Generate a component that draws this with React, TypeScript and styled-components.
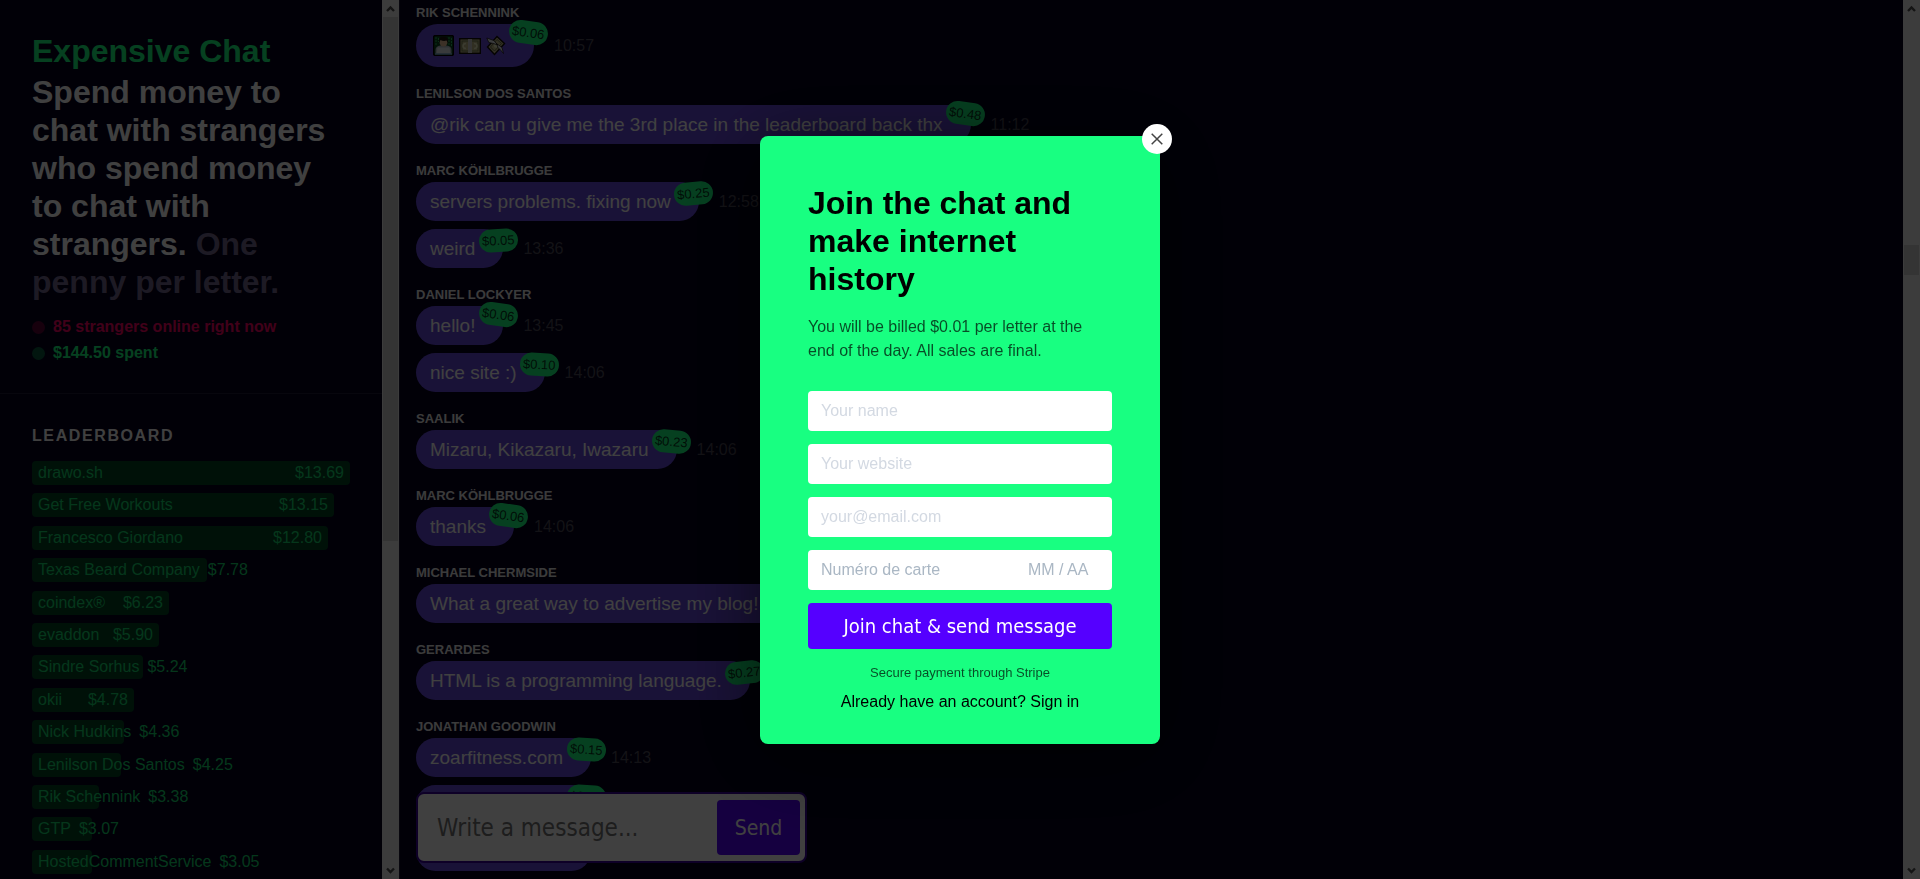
import React from "react";
import styled, { createGlobalStyle, css } from "styled-components";

const GREEN = "#18ff81";
const VIOLET = "#5500ff";
const SANS = `"Liberation Sans", Arial, sans-serif`;
const UI = `"DejaVu Sans Condensed", "DejaVu Sans", Tahoma, sans-serif`;

const GlobalStyle = createGlobalStyle`
  *, *::before, *::after { box-sizing: border-box; }
  body {
    margin: 0;
    overflow: hidden;
    background: #04001c;
    color: #fff;
    font: 16px/24px ${SANS};
  }
  h1, h2, h3, p, ul, ol { margin: 0; padding: 0; }
  ul, ol { list-style: none; }
  button, input { font: inherit; border: 0; margin: 0; }
`;

const Shell = styled.div`
  display: grid;
  grid-template-columns: 400px minmax(0, 1fr) 17px;
  height: 100vh;
  overflow: hidden;
`;

const Sidebar = styled.aside`
  display: grid;
  grid-template-columns: minmax(0, 1fr) 17px;
  min-height: 0;
  border-right: 1px solid #1c1834;
`;

const SidebarBody = styled.div`
  overflow: hidden;
`;

const Intro = styled.header`
  padding: 32px 32px 27px;
  border-bottom: 1px solid #1c1834;
`;

const Brand = styled.h1`
  margin-bottom: 3px;
  font-size: 32px;
  line-height: 38px;
  color: ${GREEN};
`;

const Tagline = styled.h2`
  font-size: 32px;
  line-height: 38px;
`;

const Muted = styled.span`
  color: #746890;
`;

const Stats = styled.ul`
  margin-top: 13px;
  font-weight: bold;
  line-height: 26px;
`;

const Stat = styled.li<{ $color: string }>`
  display: flex;
  align-items: center;
  gap: 8px;
  color: ${(p) => p.$color};

  &::before {
    content: "";
    width: 13px;
    height: 13px;
    border-radius: 50%;
    background: currentColor;
    opacity: 0.35;
  }
`;

const Board = styled.section`
  padding: 30px 32px;
`;

const BoardTitle = styled.h3`
  margin-bottom: 13px;
  font-size: 16px;
  line-height: 24px;
  letter-spacing: 0.1em;
`;

const Ranks = styled.ol`
  display: flex;
  flex-direction: column;
  justify-content: space-between;
  height: 413px;
`;

const Rank = styled.li`
  display: flex;
  justify-content: space-between;
  gap: 8px;
  padding: 0 6px;
  border-radius: 4px;
  background: #034422;
  color: #15d86e;
  white-space: nowrap;
`;

const Scrollbar = styled.div`
  display: flex;
  flex-direction: column;
  background: #f0f0f0;
`;

const Track = styled.div`
  flex: 1;
  padding: 0 1px;
`;

const Thumb = styled.div`
  background: #cdcdcd;
`;

const Chat = styled.main`
  position: relative;
  padding: 0 16px;
  overflow: hidden;
`;

const Author = styled.h3`
  padding-top: 16px;
  font-size: 13px;
  line-height: 22px;
  text-transform: uppercase;
  color: #ececec;
`;

const Group = styled.section`
  &:first-child ${Author} {
    padding-top: 2px;
  }
`;

const Messages = styled.div`
  display: flex;
  flex-direction: column;
  gap: 8px;
`;

const Message = styled.div`
  display: flex;
  align-items: center;
  gap: 20px;
`;

const Bubble = styled.div<{ $tall?: boolean }>`
  position: relative;
  display: flex;
  align-items: center;
  gap: 5px;
  padding: ${(p) => (p.$tall ? "0 27px 0 17px" : "0 28px 0 14px")};
  height: ${(p) => (p.$tall ? 43 : 39)}px;
  border-radius: 22px;
  background: #6648dc;
  font-size: 19px;
  white-space: nowrap;
`;

const Price = styled.span<{ $tilt: number }>`
  position: absolute;
  right: -14px;
  top: 0;
  padding: 0 3px;
  height: 23px;
  border-radius: 12px;
  background: ${GREEN};
  color: rgba(0, 0, 0, 0.8);
  font-size: 13px;
  line-height: 23px;
  transform: rotate(${(p) => p.$tilt}deg);
  ${(p) =>
    p.$tilt > 6 &&
    css`
      top: -3px;
    `}
`;

const Time = styled.time`
  color: #4c4a58;
`;

const Composer = styled.form`
  position: absolute;
  left: 16px;
  bottom: 16px;
  display: flex;
  width: 391px;
  height: 71px;
  padding: 6px 5px 6px 6px;
  border: 2px solid #38009c;
  border-radius: 8px;
  background: #fff;
  font-family: ${UI};
`;

const Draft = styled.input`
  flex: 1;
  min-width: 0;
  padding: 0 13px;
  background: none;
  font-size: 24px;

  &::placeholder {
    color: #757575;
    opacity: 1;
  }
`;

const SendButton = styled.button`
  width: 83px;
  border-radius: 4px;
  background: ${VIOLET};
  color: #fff;
  font-size: 21px;
`;

const Overlay = styled.div`
  position: fixed;
  inset: 0;
  display: flex;
  align-items: center;
  justify-content: center;
  background: rgba(0, 0, 0, 0.75);
`;

const Dialog = styled.div`
  position: relative;
  width: 400px;
  padding: 48px 48px 30px;
  border-radius: 8px;
  background: ${GREEN};
  color: #000;
  box-shadow: 0 12px 80px rgba(0, 0, 0, 0.6);
`;

const CloseButton = styled.button`
  position: absolute;
  top: -12px;
  right: -12px;
  display: grid;
  place-items: center;
  width: 30px;
  height: 30px;
  padding: 0;
  border-radius: 50%;
  background: #fff;
`;

const DialogTitle = styled.h2`
  font-size: 32px;
  line-height: 38px;
`;

const DialogText = styled.p`
  margin: 17px 0 28px;
  color: rgba(0, 0, 0, 0.7);
`;

const JoinForm = styled.form`
  display: flex;
  flex-direction: column;
  gap: 13px;
`;

const Field = styled.input`
  width: 100%;
  height: 40px;
  padding: 0 13px;
  border-radius: 4px;
  background: #fff;

  &::placeholder {
    color: #d3d9e2;
    opacity: 1;
  }
`;

const CardRow = styled.div`
  display: flex;
  height: 40px;
  padding: 0 13px;
  border-radius: 4px;
  background: #fff;
`;

const CardField = styled.input<{ $width?: number }>`
  flex: ${(p) => (p.$width ? "none" : 1)};
  width: ${(p) => p.$width ?? 0}px;
  min-width: 0;
  padding: 0;
  background: none;

  &::placeholder {
    color: #aab7c4;
    opacity: 1;
  }
`;

const JoinButton = styled.button`
  height: 46px;
  border-radius: 4px;
  background: ${VIOLET};
  color: #fff;
  font-family: ${UI};
  font-size: 20px;
`;

const Secure = styled.p`
  margin: 14px 0 7px;
  font-size: 13px;
  line-height: 20px;
  text-align: center;
  color: rgba(0, 0, 0, 0.7);
`;

const SignIn = styled.a`
  display: block;
  color: #000;
  text-align: center;
  text-decoration: none;
`;

const Arrow = ({ down }: { down?: boolean }) => (
  <svg width="17" height="17" viewBox="0 0 17 17" aria-hidden="true">
    <path
      d={down ? "M5 6.5l3.5 3.5L12 6.5" : "M5 11l3.5-3.5L12 11"}
      fill="none"
      stroke="#505050"
      strokeWidth="2.4"
    />
  </svg>
);

const ScrollRail = ({ start, size }: { start: string; size: string }) => (
  <Scrollbar aria-hidden="true">
    <Arrow />
    <Track>
      <div style={{ height: start }} />
      <Thumb style={{ height: size }} />
    </Track>
    <Arrow down />
  </Scrollbar>
);

const Coder = () => (
  <svg width="21" height="21" viewBox="0 0 21 21" role="img" aria-label="Technologist">
    <rect x=".5" y=".5" width="20" height="20" rx="2" fill="#0a4a20" stroke="#000" strokeWidth="1.4" />
    <path d="M3 2v9M5.500 3v4M16 2v8M18.500 3v9" stroke="#2ab85c" strokeDasharray="2 1" />
    <path d="M2.500 19v-4q0-4 5-4.500h6q5 .5 5 4.500v4z" fill="#b0bcc8" />
    <ellipse cx="10.500" cy="7" rx="4" ry="4.500" fill="#f0c49c" />
    <path d="M6 8V5q0-3.500 4.500-3.500T15 5v3l-1.500-2.500q-3 1-6-.5z" fill="#1c1410" />
    <path d="M4.500 12.500h12l1 6.500h-14z" fill="#e4eaf0" />
    <path d="M2 19h17" stroke="#78a8c8" strokeWidth="1.500" />
  </svg>
);

const Banknote = () => (
  <svg width="22" height="21" viewBox="0 0 22 21" role="img" aria-label="Banknote">
    <rect x=".7" y="3.700" width="20.600" height="14.600" fill="#c4ba88" stroke="#100c08" strokeWidth="1.400" />
    <rect x="3" y="6" width="16" height="10" fill="none" stroke="#6f7a50" />
    <path d="M7 8.500q-3 0-3 2.500t3 2.500M15 8.500q3 0 3 2.500t-3 2.500" fill="none" stroke="#ecf0c0" strokeWidth="1.500" />
    <rect x="9" y="4" width="4" height="14" fill="#d0d0d0" />
  </svg>
);

const FlyingMoney = () => (
  <svg width="21" height="21" viewBox="0 0 21 21" role="img" aria-label="Money with wings">
    <path d="M1.500 12L11 1.500l7.500 7L8.500 19.500z" fill="#c4ba88" stroke="#100c08" strokeWidth="1.400" />
    <path d="M4.500 12L11 4.500l4.500 4-7 7.500z" fill="none" stroke="#66704a" />
    <circle cx="10" cy="10.500" r="2.200" fill="#ecf0c0" />
    <path
      d="M.8 3l7 2.500 4 4.500-4.500-1.500-4.500-1zM17.500 18.500l-1.500-6-5.500-4 1.500 4 3 3z"
      fill="#e8ecf0"
      stroke="#100c08"
      strokeWidth=".7"
    />
  </svg>
);

const ranks: [string, string, number][] = [
  ["drawo.sh", "$13.69", 318],
  ["Get Free Workouts", "$13.15", 302],
  ["Francesco Giordano", "$12.80", 296],
  ["Texas Beard Company", "$7.78", 175],
  ["coindex®", "$6.23", 137],
  ["evaddon", "$5.90", 127],
  ["Sindre Sorhus", "$5.24", 111],
  ["okii", "$4.78", 102],
  ["Nick Hudkins", "$4.36", 92],
  ["Lenilson Dos Santos", "$4.25", 89],
  ["Rik Schennink", "$3.38", 67],
  ["GTP", "$3.07", 60],
  ["HostedCommentService", "$3.05", 60],
];

type Line = { text?: string; price: string; tilt: number; time: string };

const groups: { author: string; lines: Line[] }[] = [
  { author: "Rik Schennink", lines: [{ price: "$0.06", tilt: 8, time: "10:57" }] },
  {
    author: "Lenilson Dos Santos",
    lines: [
      {
        text: "@rik can u give me the 3rd place in the leaderboard back thx",
        price: "$0.48",
        tilt: 8,
        time: "11:12",
      },
    ],
  },
  {
    author: "Marc Köhlbrugge",
    lines: [
      { text: "servers problems. fixing now", price: "$0.25", tilt: -5, time: "12:58" },
      { text: "weird", price: "$0.05", tilt: -3, time: "13:36" },
    ],
  },
  {
    author: "Daniel Lockyer",
    lines: [
      { text: "hello!", price: "$0.06", tilt: 8, time: "13:45" },
      { text: "nice site :)", price: "$0.10", tilt: 3, time: "14:06" },
    ],
  },
  {
    author: "Saalik",
    lines: [{ text: "Mizaru, Kikazaru, Iwazaru", price: "$0.23", tilt: 5, time: "14:06" }],
  },
  { author: "Marc Köhlbrugge", lines: [{ text: "thanks", price: "$0.06", tilt: 8, time: "14:06" }] },
  {
    author: "Michael Chermside",
    lines: [{ text: "What a great way to advertise my blog!", price: "$0.38", tilt: 4, time: "14:10" }],
  },
  {
    author: "Gerardes",
    lines: [{ text: "HTML is a programming language.", price: "$0.27", tilt: -6, time: "14:12" }],
  },
  {
    author: "Jonathan Goodwin",
    lines: [
      { text: "zoarfitness.com", price: "$0.15", tilt: 4, time: "14:13" },
      { text: "zoarfitness.com", price: "$0.15", tilt: 3, time: "14:13" },
      { text: "zoarfitness.com", price: "$0.15", tilt: 4, time: "14:13" },
    ],
  },
];

export default function App() {
  return (
    <>
      <GlobalStyle />
      <Shell>
        <Sidebar>
          <SidebarBody>
            <Intro>
              <Brand>Expensive Chat</Brand>
              <Tagline>
                Spend money to chat with strangers who spend money to chat with strangers.{" "}
                <Muted>One penny per letter.</Muted>
              </Tagline>
              <Stats>
                <Stat $color="#ff0066">85 strangers online right now</Stat>
                <Stat $color={GREEN}>$144.50 spent</Stat>
              </Stats>
            </Intro>
            <Board>
              <BoardTitle>LEADERBOARD</BoardTitle>
              <Ranks>
                {ranks.map(([name, amount, width]) => (
                  <Rank key={name} style={{ width }}>
                    <span>{name}</span>
                    <span>{amount}</span>
                  </Rank>
                ))}
              </Ranks>
            </Board>
          </SidebarBody>
          <ScrollRail start="0%" size="62%" />
        </Sidebar>

        <Chat>
          {groups.map((group, i) => (
            <Group key={i}>
              <Author>{group.author}</Author>
              <Messages>
                {group.lines.map((line, j) => (
                  <Message key={j}>
                    <Bubble $tall={!line.text}>
                      {line.text ?? (
                        <>
                          <Coder />
                          <Banknote />
                          <FlyingMoney />
                        </>
                      )}
                      <Price $tilt={line.tilt}>{line.price}</Price>
                    </Bubble>
                    <Time>{line.time}</Time>
                  </Message>
                ))}
              </Messages>
            </Group>
          ))}
          <Composer>
            <Draft aria-label="Message" placeholder="Write a message..." />
            <SendButton type="button">Send</SendButton>
          </Composer>
        </Chat>

        <ScrollRail start="27%" size="30px" />
      </Shell>

      <Overlay>
        <Dialog role="dialog" aria-modal="true" aria-labelledby="join-title">
          <CloseButton type="button" aria-label="Close">
            <svg width="12" height="12" viewBox="0 0 12 12" aria-hidden="true">
              <path d="M.7.7l10.600 10.600M11.300.7L.7 11.300" stroke="#444" strokeWidth="1.500" />
            </svg>
          </CloseButton>
          <DialogTitle id="join-title">Join the chat and make internet history</DialogTitle>
          <DialogText>
            You will be billed $0.01 per letter at the end of the day. All sales are final.
          </DialogText>
          <JoinForm>
            <Field aria-label="Your name" placeholder="Your name" />
            <Field aria-label="Your website" placeholder="Your website" />
            <Field aria-label="Your email" type="email" placeholder="your@email.com" />
            <CardRow>
              <CardField aria-label="Numéro de carte" placeholder="Numéro de carte" />
              <CardField aria-label="MM / AA" placeholder="MM / AA" $width={71} />
            </CardRow>
            <JoinButton type="button">Join chat &amp; send message</JoinButton>
          </JoinForm>
          <Secure>Secure payment through Stripe</Secure>
          <SignIn href="#">Already have an account? Sign in</SignIn>
        </Dialog>
      </Overlay>
    </>
  );
}
